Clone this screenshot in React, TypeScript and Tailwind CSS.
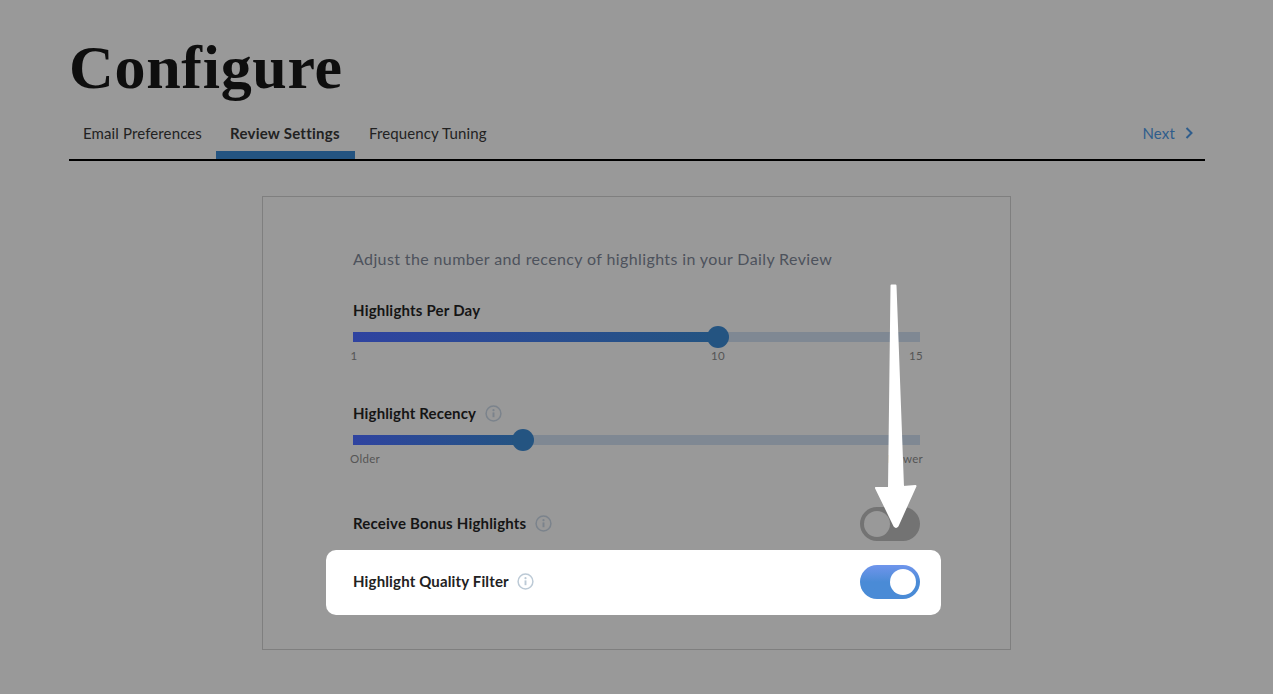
import React from "react";

const Info = ({ color = "#7b838c" }: { color?: string }) => (
  <svg width="17" height="17" viewBox="0 0 17 17" fill="none" className="shrink-0">
    <circle cx="8.5" cy="8.5" r="7.4" stroke={color} strokeWidth="1.5" />
    <circle cx="8.5" cy="5.2" r="1.1" fill={color} />
    <path d="M8.5 7.4v4.8" stroke={color} strokeWidth="1.9" />
  </svg>
);

const Slider = ({ pct, left, leftAt, mid, right }: { pct: number; left: string; leftAt: number; mid?: string; right: string }) => (
  <div>
    <div className="relative h-[10px] bg-[#7f8893]">
      <div className="h-full bg-gradient-to-r from-[#2f43a0] to-[#245481]" style={{ width: `${pct}%` }} />
      <div
        className="absolute top-[-6px] w-[22px] h-[22px] -ml-[11px] rounded-full bg-[#245481]"
        style={{ left: `${pct}%` }}
      />
    </div>
    <div className="relative h-[14px] mt-[7px] text-[11.5px] leading-[14px] text-[#555555] tracking-[0.3px]">
      <span className="absolute -translate-x-1/2" style={{ left: leftAt }}>{left}</span>
      {mid && <span className="absolute -translate-x-1/2" style={{ left: `${pct}%` }}>{mid}</span>}
      <span className="absolute right-[-3px]">{right}</span>
    </div>
  </div>
);

export default function App() {
  return (
    <div className="relative w-[1273px] h-[694px] overflow-hidden bg-[#999999] font-['Lato','Noto_Sans',sans-serif] text-[#111111]">
      <div className="px-[69px] pt-[30px] w-[1274px]">
        <h1 className="font-['Liberation_Serif',serif] font-bold text-[62px] leading-[74px] h-[74px] text-[#0e0e0e] tracking-[0.7px]">
          Configure
        </h1>
        <div className="flex items-stretch justify-between h-[57px] border-b-2 border-black">
          <div className="flex items-stretch text-[15px] text-[#222222] tracking-[0.12px] whitespace-nowrap">
            <div className="px-[14px] pt-[18px] w-[147px]">Email Preferences</div>
            <div className="w-[139px] px-[14px] pt-[18px] font-bold border-b-[8px] border-[#245481] tracking-[0.25px]">Review Settings</div>
            <div className="px-[14px] pt-[18px]">Frequency Tuning</div>
          </div>
          <div className="flex items-start gap-[9px] pt-[18px] text-[15px] text-[#2f5d8c] tracking-[0.15px]">
            <span>Next</span>
            <svg width="10" height="14" viewBox="0 0 10 14" fill="none" className="mt-[4px] mr-[11px]">
              <path d="M2.5 2l5 5-5 5" stroke="#2f5d8c" strokeWidth="2" />
            </svg>
          </div>
        </div>

        <div className="mt-[35px] ml-[193px] w-[749px] h-[454px] border border-[#7f7f7f] pt-[52px] pl-[90px]">
          <div className="w-[567px]">
            <p className="text-[16px] leading-[20px] text-[#4d525c] tracking-[0.38px]">
              Adjust the number and recency of highlights in your Daily Review
            </p>
            <div className="mt-[31px] text-[15px] leading-[20px] font-bold text-[#151515] tracking-[0.2px]">Highlights Per Day</div>
            <div className="mt-[12px]">
              <Slider pct={64.37} left="1" leftAt={1} mid="10" right="15" />
            </div>
            <div className="mt-[40px] flex items-center gap-[9px] h-[20px] text-[15px] font-bold text-[#151515] tracking-[0.15px]">
              Highlight Recency <Info />
            </div>
            <div className="mt-[12px]">
              <Slider pct={30} left="Older" leftAt={12} right="Newer" />
            </div>
            <div className="mt-[41px] flex items-center justify-between h-[34px]">
              <div className="flex items-center gap-[9px] mb-[2px] text-[15px] font-bold text-[#151515] tracking-[0.2px]">
                Receive Bonus Highlights <Info />
              </div>
              <div className="w-[60px] h-[34px] rounded-full bg-[#737373] p-[4px]">
                <div className="w-[26px] h-[26px] rounded-full bg-[#999999]" />
              </div>
            </div>
          </div>
          <div className="mt-[9px] -ml-[27px] w-[615px] h-[65px] rounded-[10px] bg-white pl-[27px] pr-[21px] pb-[2px] flex items-center justify-between">
            <div className="flex items-center gap-[8px] text-[15px] font-bold text-[#222222] tracking-[0.15px]">
              Highlight Quality Filter <Info color="#bccad6" />
            </div>
            <div className="w-[60px] h-[34px] rounded-full bg-gradient-to-b from-[#6f95ec] to-[#4a8bd6] to-50% p-[4px] flex justify-end">
              <div className="w-[26px] h-[26px] rounded-full bg-white" />
            </div>
          </div>
        </div>
      </div>

      <svg width="60" height="260" viewBox="0 0 60 260" className="absolute left-[866px] top-[278px]">
        <path
          d="M25.5 7.5 L29.5 7.5 L37 209 L49.5 208 L31.5 248 Q30 250 28.5 248 L10 210 L23 210 Z"
          fill="#ffffff"
          stroke="#ffffff"
          strokeWidth="2"
          strokeLinejoin="round"
        />
      </svg>
    </div>
  );
}
